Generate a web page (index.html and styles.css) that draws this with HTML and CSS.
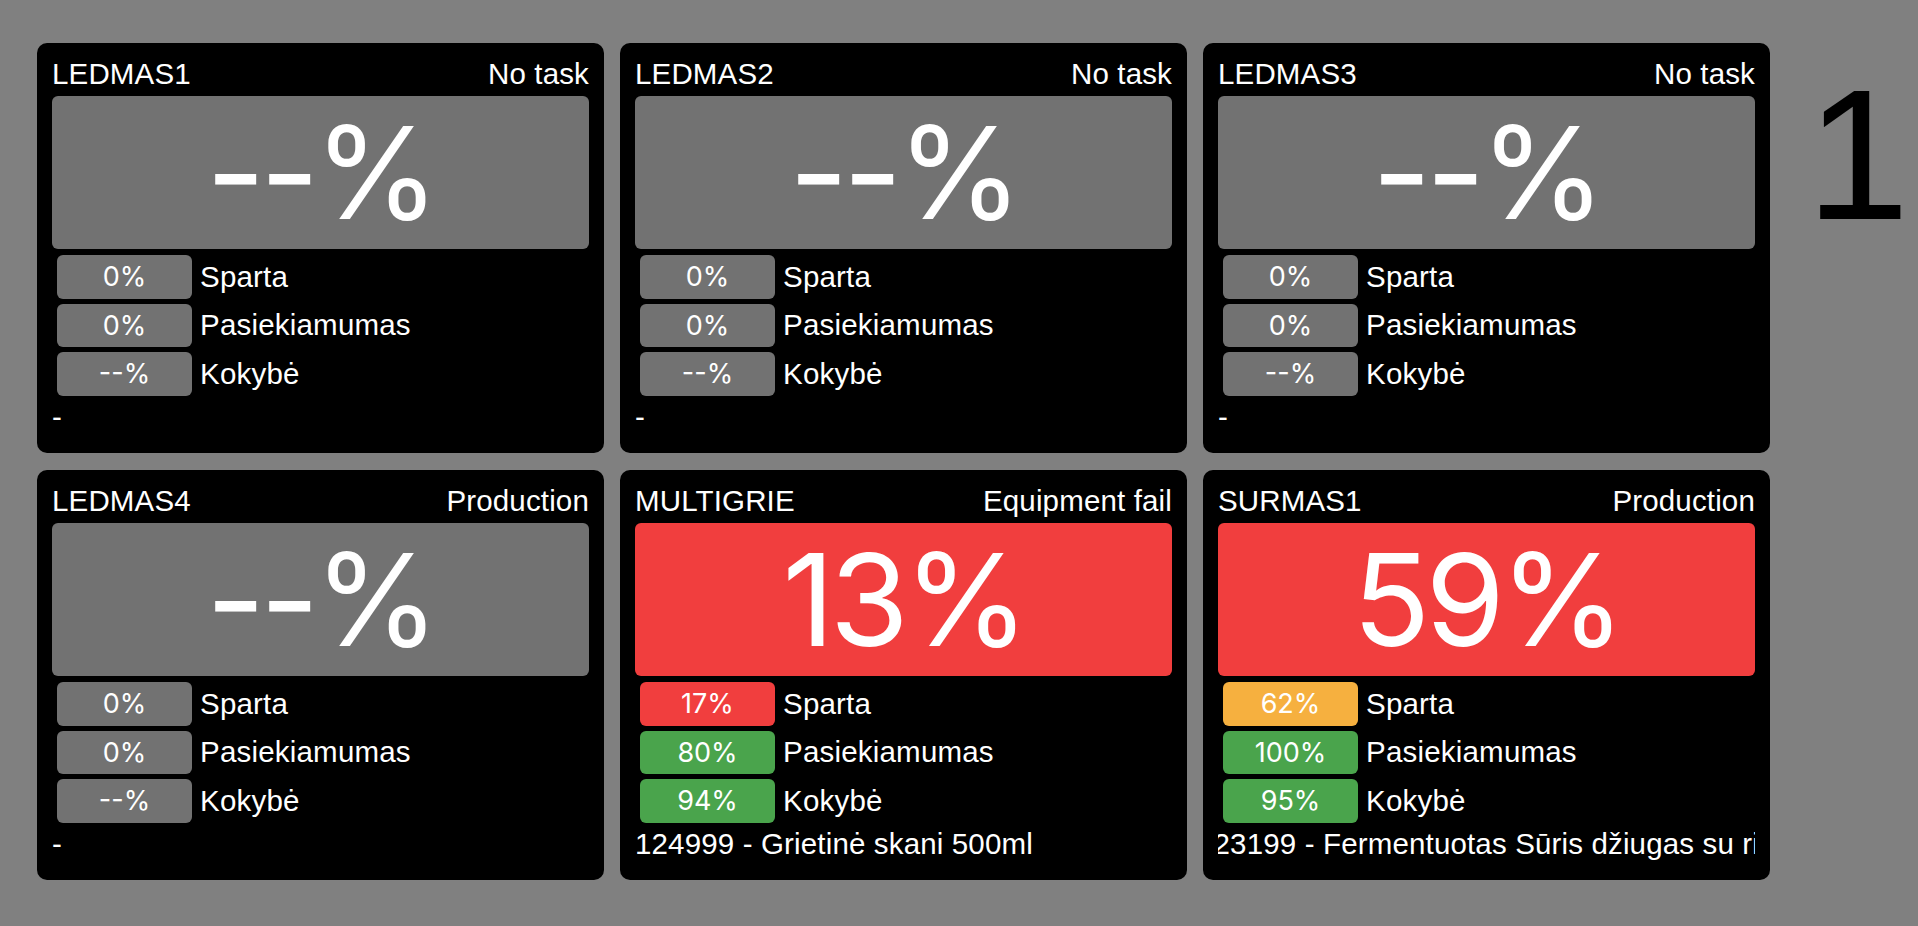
FILE: index.html
```html
<!DOCTYPE html>
<html lang="lt">
<head>
<meta charset="utf-8">
<title>Dashboard</title>
<link rel="stylesheet" href="styles.css">
</head>
<body>
<div class="page">
  <div class="grid">
    <div class="card">
      <div class="head"><span>LEDMAS1</span><span>No task</span></div>
      <div class="big gray">--%</div>
      <div class="rows">
        <div class="row"><div class="pill gray">0%</div><span>Sparta</span></div>
        <div class="row"><div class="pill gray">0%</div><span>Pasiekiamumas</span></div>
        <div class="row"><div class="pill gray">--%</div><span>Kokybė</span></div>
      </div>
      <div class="product">-</div>
    </div>
    <div class="card">
      <div class="head"><span>LEDMAS2</span><span>No task</span></div>
      <div class="big gray">--%</div>
      <div class="rows">
        <div class="row"><div class="pill gray">0%</div><span>Sparta</span></div>
        <div class="row"><div class="pill gray">0%</div><span>Pasiekiamumas</span></div>
        <div class="row"><div class="pill gray">--%</div><span>Kokybė</span></div>
      </div>
      <div class="product">-</div>
    </div>
    <div class="card">
      <div class="head"><span>LEDMAS3</span><span>No task</span></div>
      <div class="big gray">--%</div>
      <div class="rows">
        <div class="row"><div class="pill gray">0%</div><span>Sparta</span></div>
        <div class="row"><div class="pill gray">0%</div><span>Pasiekiamumas</span></div>
        <div class="row"><div class="pill gray">--%</div><span>Kokybė</span></div>
      </div>
      <div class="product">-</div>
    </div>
    <div class="card">
      <div class="head"><span>LEDMAS4</span><span>Production</span></div>
      <div class="big gray">--%</div>
      <div class="rows">
        <div class="row"><div class="pill gray">0%</div><span>Sparta</span></div>
        <div class="row"><div class="pill gray">0%</div><span>Pasiekiamumas</span></div>
        <div class="row"><div class="pill gray">--%</div><span>Kokybė</span></div>
      </div>
      <div class="product">-</div>
    </div>
    <div class="card">
      <div class="head"><span>MULTIGRIE</span><span>Equipment fail</span></div>
      <div class="big red">13%</div>
      <div class="rows">
        <div class="row"><div class="pill red">17%</div><span>Sparta</span></div>
        <div class="row"><div class="pill green">80%</div><span>Pasiekiamumas</span></div>
        <div class="row"><div class="pill green">94%</div><span>Kokybė</span></div>
      </div>
      <div class="product">124999 - Grietinė skani 500ml</div>
    </div>
    <div class="card">
      <div class="head"><span>SURMAS1</span><span>Production</span></div>
      <div class="big red">59%</div>
      <div class="rows">
        <div class="row"><div class="pill orange">62%</div><span>Sparta</span></div>
        <div class="row"><div class="pill green">100%</div><span>Pasiekiamumas</span></div>
        <div class="row"><div class="pill green">95%</div><span>Kokybė</span></div>
      </div>
      <div class="product"><span class="marquee" style="margin-left:-21px">123199 - Fermentuotas Sūris džiugas su riešutais 200g</span></div>
    </div>
  </div>
  <div class="pagenum">1</div>
</div>
</body>
</html>
```

FILE: styles.css
```css
html, body {
  margin: 0;
  padding: 0;
  background: #808080;
}
body {
  font-family: "Liberation Sans", Arial, sans-serif;
  color: #fff;
}
.page {
  display: flex;
  align-items: flex-start;
  padding: 43px 0 0 37px;
}
.grid {
  display: grid;
  grid-template-columns: repeat(3, 567px);
  column-gap: 16px;
  row-gap: 17px;
}
.card {
  background: #000;
  border-radius: 10px;
  padding: 14px 15px 21px;
  box-sizing: border-box;
  height: 410px;
  overflow: hidden;
}
.head {
  display: flex;
  justify-content: space-between;
  font-size: 29.5px;
  letter-spacing: 0.15px;
  line-height: 33px;
  margin-bottom: 6px;
  white-space: nowrap;
}
.big {
  height: 153px;
  border-radius: 6px;
  display: flex;
  align-items: center;
  justify-content: center;
  font-family: Inter, "Noto Sans", sans-serif;
  font-size: 128px;
  letter-spacing: -5px;
  line-height: 1;
  color: #fff;
}
.gray { background: #727272; }
.red { background: #f13e3e; }
.green { background: #4aa44c; }
.orange { background: #f6b03f; }
.rows {
  display: flex;
  flex-direction: column;
  gap: 5px;
  margin-top: 6px;
  padding-left: 5px;
}
.row {
  display: flex;
  align-items: center;
  gap: 8px;
  height: 43.5px;
  font-size: 29.5px;
  letter-spacing: 0.2px;
}
.pill {
  width: 135px;
  height: 100%;
  border-radius: 6px;
  display: flex;
  align-items: center;
  justify-content: center;
  font-family: Inter, "Noto Sans", sans-serif;
  font-size: 27px;
  letter-spacing: 0;
}
.product {
  margin-top: 4px;
  font-size: 29.5px;
  letter-spacing: 0.15px;
  line-height: 33px;
  white-space: nowrap;
  overflow: hidden;
}
.marquee {
  display: inline-block;
}
.pagenum {
  margin-left: 36px;
  margin-top: 5px;
  font-size: 186px;
  line-height: 1.149;
  color: #000;
}
```
